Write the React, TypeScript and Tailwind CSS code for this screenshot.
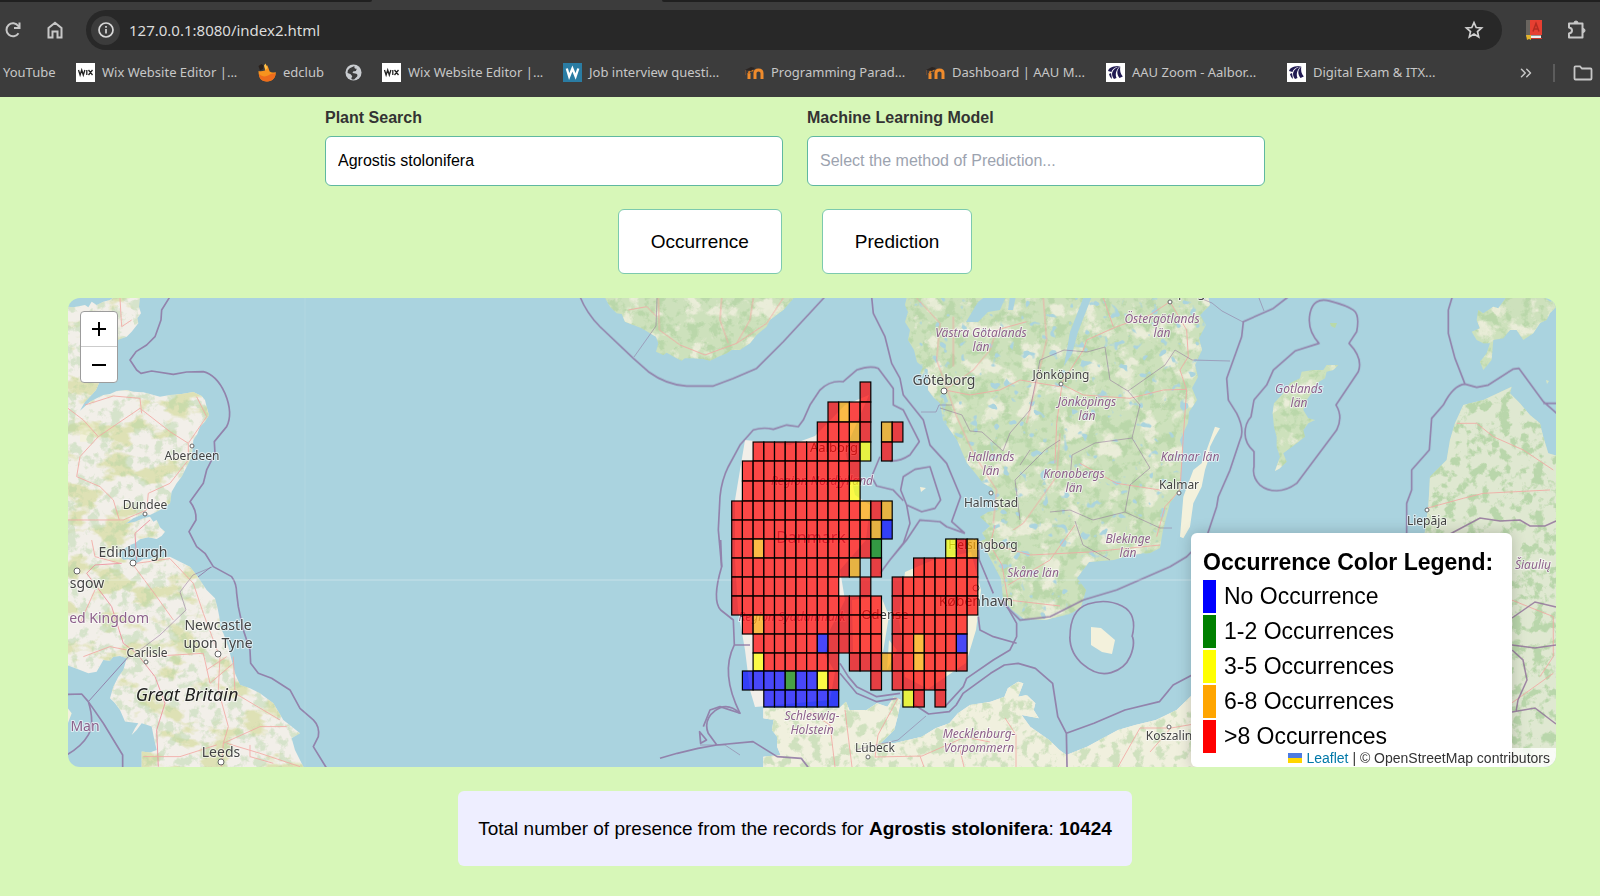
import { ChevronsRight } from "lucide-react";

const ROW_EDGES = [382, 402, 422, 442, 461, 481, 501, 520, 539, 558, 577, 596, 615, 634, 653, 671, 690, 707];
const CELL_ROWS = [
  "............R",
  ".........RORR",
  "........RRROR.OR",
  "..RRRRRRRRRRY.R",
  ".RRRRRRRRRRR",
  ".RRRRRRRRRRY",
  "RRRRRRRRRRRRORO",
  "RRRRRRRRRRRRROB",
  "RRORRRRRRRRRRG......YRO",
  "RRRRRRRRRRRO.R...RRRRRR",
  "RRRRRRRRRR..R..RRRRRRRR",
  "RRRRRRRRRRRRRR.RRRRRRRR",
  ".RORRRRRRRRRRR.RRRRRRR",
  "..RRRRRRBRRRRR.RRORRRB",
  "..YRRRRRRR.RRRORRORRRR",
  ".BBBBGBBYR...R.RRRRR",
  "...BBBBBBB......YR.R",
];
const CELL_FILL: Record<string, string> = { R: "#ff0000", O: "#ffa500", Y: "#ffff00", G: "#008000", B: "#0000ff" };
const COL_START = 731.7;
const COL_WIDTH = 10.7;

const LEGEND = [
  { swatch: "bg-[#0000ff]", label: "No Occurrence" },
  { swatch: "bg-[#008000]", label: "1-2 Occurrences" },
  { swatch: "bg-[#ffff00]", label: "3-5 Occurrences" },
  { swatch: "bg-[#ffa500]", label: "6-8 Occurrences" },
  { swatch: "bg-[#ff0000]", label: ">8 Occurrences" },
];

function WixIcon() {
  return (
    <svg viewBox="0 0 19 19" className="size-[19px] shrink-0">
      <rect width="19" height="19" fill="#fff" />
      <path d="M2.500 7l1.600 5 1.600-5 1.600 5 1.600-5M10.800 7v5M12.500 7l4 5M16.500 7l-4 5" fill="none" stroke="#222" strokeWidth="1.300" />
    </svg>
  );
}

function EdclubIcon() {
  return (
    <svg viewBox="0 0 18 19" className="h-[19px] w-[18px] shrink-0">
      <path d="M.5 8c0 7 3 10.500 8.500 10.500s9-4 8.700-9.500c-2 .6-4 1-6-.5L9.500 2.500 6.500 3l.5 4.500c-3 1-5 .8-6.500.5z" fill="#f7931e" />
      <path d="M1 11c3 3 7 3 10 1s5-1.500 6.500-1.500c0 4-3 8-8.500 8s-8-3.500-8-7.500z" fill="#ee6c1c" />
      <path d="M.5 3l3-2 2 1.500-.5 3.500-3 1.500z" fill="#2a211c" />
      <path d="M6 2.500L7.500.5l2 4.500-2 2z" fill="#ffc04a" />
    </svg>
  );
}

function GlobeIcon() {
  return (
    <svg viewBox="0 0 18 18" className="size-[17px] shrink-0">
      <circle cx="9" cy="9" r="8.500" fill="#c9ccd0" />
      <path d="M5 4.500l5-2.500c-.5 2 .5 3 2.500 3l-1 2.500-3 .5-.5 1.500 4 .8c2 1 1.200 3-.3 4l-2 2c-2 .3-3-.3-3-1.300l1-2-2-2.500-3-1 .3-3z" fill="#3c3c3c" />
    </svg>
  );
}

function WBadgeIcon() {
  return (
    <svg viewBox="0 0 19 19" className="size-[19px] shrink-0">
      <rect width="19" height="19" fill="#2a7ca3" />
      <path d="M3.800 5.500l2.400 8 3.200-8 3.200 8 2.700-8" fill="none" stroke="#fff" strokeWidth="2.300" />
    </svg>
  );
}

function MoodleIcon() {
  return (
    <svg viewBox="0 0 20 14" className="h-[14px] w-5 shrink-0">
      <path d="M5 13V7M11 13V7c0-4 7-4 7 0v6" fill="none" stroke="#ef8b2c" strokeWidth="3" />
      <path d="M5 8V6.500C5 4.500 8 4 9 5" fill="none" stroke="#d97a22" strokeWidth="2" />
      <path d="M1 4l6-3 4 1-4 3z" fill="#2c2522" />
      <path d="M1.500 4v5" stroke="#6b4a35" strokeWidth="1" />
    </svg>
  );
}

function AauIcon() {
  return (
    <svg viewBox="0 0 19 19" className="size-[19px] shrink-0">
      <rect width="19" height="19" fill="#fff" />
      <path d="M2 8c1-4 6-5 12-5-4 1-8 3-8.500 6z" fill="#211a52" />
      <path d="M8 16c-4-5-2-10 6-13-4 4-5 8-3.500 12z" fill="#211a52" />
      <path d="M13.500 15c-3-4-3-8 .8-11.500-.6 4 0 7 2.500 10z" fill="#211a52" />
      <path d="M3 11c.5 2 1.500 4 3 5l-1-6z" fill="#211a52" />
    </svg>
  );
}

const BOOKMARKS = [
  { label: "Wix Website Editor |...", Icon: WixIcon, box: "w-[162px]" },
  { label: "edclub", Icon: EdclubIcon, box: "w-[67px]" },
  { label: "", Icon: GlobeIcon, box: "w-[17px]" },
  { label: "Wix Website Editor |...", Icon: WixIcon, box: "w-[161px]" },
  { label: "Job interview questi...", Icon: WBadgeIcon, box: "w-[161px]" },
  { label: "Programming Parad...", Icon: MoodleIcon, box: "w-[161px]" },
  { label: "Dashboard | AAU M...", Icon: MoodleIcon, box: "w-[161px]" },
  { label: "AAU Zoom - Aalbor...", Icon: AauIcon, box: "w-[161px]" },
  { label: "Digital Exam & ITX...", Icon: AauIcon, box: "w-[161px]" },
];

function BrowserBar() {
  return (
    <header className="bg-[#3c3c3c] font-['Noto_Sans',sans-serif] text-[#c7c7c7]">
      <div className="flex h-[2px] justify-between">
        <div className="w-[372px] rounded-br-lg bg-[#202020]" />
        <div className="w-[938px] rounded-bl-lg bg-[#202020]" />
      </div>
      <div className="flex items-center pt-2">
        <button aria-label="Reload" className="ml-1 shrink-0">
          <svg viewBox="0 0 18 18" className="size-[18px]" fill="none" stroke="#c7c7c7" strokeWidth="2">
            <path d="M14.500 12.200A6.500 6.500 0 1 1 14.300 5L15.500 6.500M15.500 1.500V7H10" />
          </svg>
        </button>
        <button aria-label="Home" className="ml-6 shrink-0">
          <svg viewBox="0 0 18 20" className="h-5 w-[18px]" fill="none" stroke="#c7c7c7" strokeWidth="2">
            <path d="M2.500 8L9 2.700 15.500 8v9.500h-4v-6h-5v6h-4z" />
          </svg>
        </button>
        <div className="ml-[22px] flex h-10 flex-1 items-center rounded-full bg-[#282828] pr-[18px] pl-[5px]">
          <button aria-label="Site information" className="flex size-[29px] items-center justify-center rounded-full bg-[#3c3c3c]">
            <svg viewBox="0 0 16 16" className="size-4" fill="none" stroke="#d8d8d8" strokeWidth="1.700">
              <circle cx="8" cy="8" r="7" />
              <path d="M8 7v4.500M8 4v1.700" />
            </svg>
          </button>
          <input
            aria-label="Address"
            defaultValue="127.0.0.1:8080/index2.html"
            className="ml-[9px] h-8 flex-1 bg-transparent text-[15px] text-[#dcdcdc] outline-none"
          />
          <button aria-label="Bookmark this page">
            <svg viewBox="0 0 20 20" className="size-5" fill="none" stroke="#d0d0d0" strokeWidth="1.700">
              <path d="M10 2.500l2.200 5 5.400.5-4.100 3.600 1.200 5.300L10 14.100l-4.700 2.800 1.200-5.300L2.400 8l5.400-.5z" />
            </svg>
          </button>
        </div>
        <button aria-label="Dictionary" className="ml-6 shrink-0">
          <svg viewBox="0 0 16 20" className="h-5 w-4">
            <path d="M0 0h4v17H0z" fill="#69655f" />
            <path d="M4 0h12v15H4z" fill="#e63f31" />
            <path d="M4 15.500h11V18H4z" fill="#eee" />
            <path d="M4 18h12v1H4z" fill="#c7372c" />
            <path d="M0 15h5v5l-2-1-2 1z" fill="#e5b52c" />
            <path d="M7 11.500l3-8 3 8M8 9h4" stroke="#b32b20" strokeWidth="1.500" fill="none" />
          </svg>
        </button>
        <button aria-label="Extensions" className="mr-[13px] ml-[25px] shrink-0">
          <svg viewBox="0 0 20 20" className="size-5" fill="none" stroke="#c7c7c7" strokeWidth="2">
            <path d="M2 3.500h13.500v14H2v-4c4-.5 4-5.500 0-6z" strokeLinejoin="round" />
            <path d="M7 3a2 2 0 0 1 4 0zM16 8.500a2 2 0 0 1 0 4z" fill="#c7c7c7" strokeWidth="1" />
          </svg>
        </button>
      </div>
      <nav aria-label="Bookmarks" className="flex h-[47px] items-center pb-[2px] pl-[3px] text-[13px] whitespace-nowrap">
        <a href="#youtube" className="w-[54px]">YouTube</a>
        <div className="ml-[19px] flex items-center gap-5">
          {BOOKMARKS.map(({ label, Icon, box }, i) => (
            <a key={i} href="#bookmark" aria-label={label || "Website"} className={`flex shrink-0 items-center gap-[7px] ${box}`}>
              <Icon />
              {label && <span>{label}</span>}
            </a>
          ))}
        </div>
        <div className="ml-auto flex items-center pr-[7px]">
          <button aria-label="More bookmarks"><ChevronsRight className="size-[18px]" /></button>
          <div className="mr-[18px] ml-[18px] h-[18px] w-[2px] bg-[#5c5c5c]" />
          <button aria-label="All bookmarks">
            <svg viewBox="0 0 20 16" className="h-4 w-5" fill="none" stroke="#c7c7c7" strokeWidth="1.800">
              <path d="M1.500 2.500c0-1 .5-1.200 1-1.200H7l2 2.200h8.500c.7 0 1 .5 1 1v9c0 .7-.4 1-1 1h-15c-.7 0-1-.4-1-1z" />
            </svg>
          </button>
        </div>
      </nav>
    </header>
  );
}

type Label = [text: string, x: number, y: number, size: number];
const CITIES: Label[] = [
  ["Aberdeen", 192, 460, 12], ["Dundee", 145, 509, 12], ["Edinburgh", 133, 557, 14], ["sgow", 87, 588, 14],
  ["Newcastle", 218, 630, 14], ["upon Tyne", 218, 648, 14], ["Carlisle", 147, 657, 12], ["Leeds", 221, 757, 14],
  ["Göteborg", 944, 385, 14], ["Jönköping", 1061, 379, 12], ["Halmstad", 991, 507, 12], ["Kalmar", 1179, 489, 12],
  ["Liepāja", 1427, 525, 12], ["Helsingborg", 983, 549, 12], ["København", 976, 606, 14], ["Odense", 885, 619, 13],
  ["Aalborg", 834, 452, 13], ["Lübeck", 875, 752, 12], ["Koszalin", 1169, 740, 12], ["Norrköping", 1170, 297, 13],
];
const REGIONS: Label[] = [
  ["Västra Götalands", 981, 337, 12], ["län", 981, 351, 12], ["Hallands", 991, 461, 12], ["län", 991, 475, 12],
  ["Östergötlands", 1162, 323, 12], ["län", 1162, 337, 12], ["Jönköpings", 1087, 406, 12], ["län", 1087, 420, 12],
  ["Kalmar län", 1190, 461, 12], ["Kronobergs", 1074, 478, 12], ["län", 1074, 492, 12], ["Gotlands", 1299, 393, 12],
  ["län", 1299, 407, 12], ["Blekinge", 1128, 543, 12], ["län", 1128, 557, 12], ["Skåne län", 1033, 577, 12],
  ["Region Nordjylland", 822, 485, 12], ["Region Syddanmark", 792, 621, 12], ["Schleswig-", 812, 720, 12], ["Holstein", 812, 734, 12],
  ["Mecklenburg-", 979, 738, 12], ["Vorpommern", 979, 752, 12], ["Šiaulių", 1533, 569, 12],
];
const DOTS = [
  [192, 446, 2], [145, 514, 2], [133, 563, 3], [77, 571, 3], [218, 654, 3], [146, 662, 2], [221, 762, 3], [944, 391, 3],
  [1061, 384, 2], [991, 493, 2], [1179, 493, 2], [1427, 510, 2], [976, 588, 3], [868, 757, 2], [1169, 727, 2], [1170, 302, 2],
];

const BRITAIN =
  "M24 50L40 52 60 48 75 45 85 52 95 35 110 45 130 35 150 30 165 20H240L237 50 243 70 232 85 235 100 215 125 200 140 172 150 150 190 130 250 108 300 90 320 75 335 60 362 90 335 110 325 130 315 150 312 170 303 200 300 220 305 250 307 270 312 300 320 330 315 365 312 400 306 425 318 435 330 440 350 447 375 435 395 420 410 412 432 400 450 398 475 395 500 380 530 365 560 350 580 335 605 330 640 310 655 290 665 270 675 250 672 220 685 195 702 225 695 250 685 270 680 280 695 290 690 300 712 315 725 305 738 290 747 265 742 240 748 225 760 210 765 190 778 170 792 190 810 205 808 230 820 250 808 270 807 300 803 330 800 360 815 390 830 405 850 420 870 440 900 465 925 472 950 478 980 480 1010 490 1030 505 1070 515 1110 525 1150 540 1185 570 1195 600 1210 640 1240 655 1265 670 1290 695 1310 720 1330 695 1345 705 1380 735 1440H245V1385L270 1388 290 1380 282 1345 275 1310 262 1305 245 1300 230 1320 215 1335 225 1315 235 1300 195 1295 180 1260 165 1240 150 1225 160 1190 175 1160 190 1140 200 1105 180 1098 160 1100 150 1112 130 1110 110 1145 85 1150 60 1140 20 1125z";
const NORWAY = "M103 20L120 50 140 70 155 72 165 95 190 105 215 115 240 130 258 140 265 160 258 185 280 195 290 188 320 205 335 212 345 205 370 205 400 207 420 212 445 200 470 190 485 180 510 180 540 160 560 135 590 110 600 90 640 60 675 20z";
const SWEDEN =
  "M907 296L905 305 908 312 905 322 910 330 908 340 914 350 917 362 923 367 920 373 928 380 928 390 934 398 940 403 943 420 957 440 962 452 967 463 975 473 983 483 992 488 995 495 998 510 988 512 980 517 990 526 982 533 986 539 978 542 986 550 991 560 1001 579 1003 598 1012 610 1024 619 1045 620 1070 614 1081 607 1086 590 1077 578 1089 562 1114 560 1130 555 1150 553 1160 548 1163 530 1170 503 1180 490 1181 470 1183 450 1180 440 1188 423 1189 412 1197 400 1192 388 1198 377 1195 365 1202 350 1199 338 1206 325 1200 315 1210 305 1208 296z";
const GERMANY =
  "M300 400V350L350 345 340 320 340 290 325 270 330 240 300 235V205H520L540 185 550 210 600 210 630 190 660 200 680 170 700 180 690 230 680 270 640 310 680 310 720 300 760 290 800 265 840 250 865 220 900 195 960 185 1000 170 1010 145 1040 125 1055 130 1040 170 1065 165 1090 190 1085 210 1100 235 1050 225 1075 260 1130 300 1160 330 1180 345 1240 320 1330 270 1380 255 1440 240 1500 210 1545 165 1620 100V400z";
const GOTLAND = "M865 225L850 240 830 245 825 265 800 280 785 310 770 330 760 360 775 385 795 390 775 400 760 420 765 440 740 460 720 475 700 490 710 515 690 535 675 543 690 500 680 470 680 440 672 410 668 370 672 340 700 310 720 280 750 265 755 245 790 240 820 240 830 225z";
const OLAND = "M495 410L510 415 495 440 480 470 475 510 465 540 455 590 430 640 420 710 400 745 390 740 400 620 430 540 455 520 470 480z";
const SAAREMAA = "M1285 60L1300 70 1330 50 1345 55 1370 20H1480L1500 35 1520 30V50L1500 70 1490 90 1470 100 1450 130 1420 150 1400 120 1380 120 1360 145 1330 150 1325 210 1300 240 1290 215 1310 190 1320 160 1300 160 1280 150 1265 125 1290 115 1280 90z";
const LATVIA = "M1385 290L1380 310 1410 340 1440 375 1470 400 1480 440 1495 490 1530 500V1430H1370V1000L1120 1000 1100 850 1120 760 1135 650 1140 560 1190 510 1200 450 1215 400 1240 345 1300 330z";
const JUTLAND = "M869 395L845 405 815 436 790 445 745 440 740 470 735 500 735 560 738 610 745 650 750 690 755 707 830 700 835 672 825 655 830 630 845 600 840 570 866 540 870 505 855 495 845 450z";

function Land() {
  return (
    <>
      <g fill="#f2efe9">
        <path d={BRITAIN} transform="translate(60 290) scale(.3333)" />
        <path d={JUTLAND} />
        <path d={GERMANY} transform="translate(660 640) scale(.3444 .3333)" />
      </g>
      <g fill="#cde1bc">
        <path d={NORWAY} transform="translate(570 290) scale(.3333)" />
        <path d={SWEDEN} />
        <path d={GOTLAND} transform="translate(1050 290) scale(.3333)" />
        <path d={SAAREMAA} transform="translate(1050 290) scale(.3333)" />
        <path d={LATVIA} transform="translate(1050 290) scale(.3333)" />
      </g>
      <g fill="#f3f1dc">
        <path d={OLAND} transform="translate(1050 290) scale(.3333)" />
        <path d="M1091 627L1101 628 1115 640 1112 654 1102 652 1091 645z" />
        <path d="M852 600l29-4 8 20-6 36-30 0zM905 572l28-12 38-8 10 38-5 40-10 33-38 26-23-12-6-60zM889 640l8 10-10 20zM920 487l6 1-5 4z" />
        <path d="M60 400h40v55H60zM20 1250l15 20-15 40z" transform="translate(60 290) scale(.3333)" />
      </g>
      <path d="M1330 323l7 0-2 5-4-2z" fill="#b9d9a8" />
      <path d="M1546 380l3 1-2 3z" fill="#d6e6c6" />
    </>
  );
}

function BaseMap() {
  return (
    <svg
      role="img"
      aria-label="Occurrence map of Denmark"
      viewBox="68 298 1488 469"
      preserveAspectRatio="xMidYMid slice"
      className="block h-full w-full"
    >
      <defs>
        <clipPath id="west"><path d={BRITAIN} transform="translate(60 290) scale(.3333)" /></clipPath>
        <clipPath id="south"><path d={GERMANY} transform="translate(660 640) scale(.3444 .3333)" /></clipPath>
        <clipPath id="north">
          <path d={NORWAY} transform="translate(570 290) scale(.3333)" />
          <path d={SWEDEN} />
          <path d={GOTLAND} transform="translate(1050 290) scale(.3333)" />
          <path d={SAAREMAA} transform="translate(1050 290) scale(.3333)" />
        </clipPath>
        <clipPath id="east"><path d={LATVIA} transform="translate(1050 290) scale(.3333)" /></clipPath>
        <filter id="forest" x="0" y="0" width="1" height="1" colorInterpolationFilters="sRGB">
          <feTurbulence type="fractalNoise" baseFrequency=".09" numOctaves="4" seed="4" />
          <feColorMatrix values="0 0 0 0 .68  0 0 0 0 .82  0 0 0 0 .62  7 0 0 0 -3.500" />
        </filter>
        <filter id="fields" x="0" y="0" width="1" height="1" colorInterpolationFilters="sRGB">
          <feTurbulence type="fractalNoise" baseFrequency=".05" numOctaves="5" seed="11" />
          <feColorMatrix values="0 0 0 0 .95  0 0 0 0 .94  0 0 0 0 .88  7 0 0 0 -3.900" />
        </filter>
        <filter id="moor" x="0" y="0" width="1" height="1" colorInterpolationFilters="sRGB">
          <feTurbulence type="fractalNoise" baseFrequency=".03 .05" numOctaves="4" seed="7" />
          <feColorMatrix values="0 0 0 0 .85  0 0 0 0 .87  0 0 0 0 .66  8 0 0 0 -4.200" />
        </filter>
        <filter id="lakes" x="0" y="0" width="1" height="1" colorInterpolationFilters="sRGB">
          <feTurbulence type="fractalNoise" baseFrequency=".1" numOctaves="2" seed="23" />
          <feColorMatrix values="0 0 0 0 .67  0 0 0 0 .83  0 0 0 0 .87  12 0 0 0 -8" />
        </filter>
      </defs>
      <rect x="68" y="298" width="1488" height="469" fill="#aad3df" />
      <Land />
      <g clipPath="url(#west)">
        <rect x="68" y="298" width="260" height="469" filter="url(#moor)" opacity=".8" />
        <rect x="68" y="298" width="260" height="469" filter="url(#forest)" opacity=".4" />
      </g>
      <g clipPath="url(#south)">
        <rect x="740" y="670" width="480" height="100" fill="#f0f0de" />
        <rect x="740" y="670" width="480" height="100" filter="url(#forest)" opacity=".5" />
      </g>
      <g clipPath="url(#north)">
        <rect x="590" y="298" width="966" height="330" filter="url(#forest)" opacity=".6" />
        <rect x="590" y="298" width="966" height="330" filter="url(#fields)" opacity=".8" />
        <rect x="850" y="298" width="380" height="330" filter="url(#lakes)" />
      </g>
      <g clipPath="url(#east)">
        <rect x="1400" y="380" width="156" height="387" fill="#efeee2" opacity=".55" />
        <rect x="1400" y="380" width="156" height="387" filter="url(#forest)" opacity=".75" />
      </g>

      {/* Large lakes */}
      <path d="M966 322l12-20 8-6h20l-6 14-12 2-10 10zM1064 366l6-34 14-36h8l-14 36-6 22zM1010 296h6l-3 14h-5z" fill="#aad3df" />

      {/* Roads */}
      <g fill="none" stroke="#f2a9a4" strokeWidth="1" opacity=".85">
        <g transform="translate(60 290) scale(.3333)" strokeWidth="3">
          <path d="M24 355L70 390 115 440 60 500 50 560 120 590 160 630 178 690M115 440L240 355 330 425 385 460 440 380 410 320M75 345L160 318 240 325 245 370M385 460V510L330 580 265 610 260 660 190 690 24 690" />
          <path d="M230 810L225 730 270 690M185 820L105 825 80 850 155 950 190 1060 230 1090 285 1160 315 1240 290 1320 295 1430" stroke="#ec8f9c" />
          <path d="M220 825L290 920 340 990M230 820L330 806 400 880 430 970 475 1090M480 1100L475 1200 505 1310 490 1360 485 1430M520 1100L525 1210 660 1290M490 1360L600 1310 680 1310M500 1360L600 1390 720 1430M260 1100L430 1090M250 1400L360 1400 470 1365M570 1365V1400L640 1420M430 1090L450 1180 520 1120M70 1100L150 1070 200 1080M440 1140L500 1100" />
          <path d="M180 24L185 110 215 90M95 750L105 800 180 820M60 1000L105 900" />
        </g>
        <g transform="translate(570 290) scale(.3333)" strokeWidth="3">
          <path d="M265 24L268 120 330 165 405 195 500 160 590 100 640 24M455 24L450 90 475 160M550 24L540 90 500 160M175 60L230 50 260 80" />
          <path d="M1040 24L1110 100 1100 210 1125 280 1160 380 1210 490 1280 600 1270 700M1125 300L1200 315 1290 300 1350 270 1470 290M1125 300L1210 240 1260 180 1280 120 1370 95M1150 80L1150 230M1420 24L1430 150 1370 400M1470 430L1460 560 1360 700 1330 720" />
        </g>
        <g transform="translate(1050 290) scale(.3333)" strokeWidth="3">
          <path d="M35 280L100 180 110 150 200 110 300 75 360 35M160 24L190 110M360 35L410 120 415 200 390 240 410 300 400 440 390 600 345 650 320 740M35 290L20 400 15 520M40 285L100 315 240 325 340 300 410 298M90 520L200 580 330 600" />
          <path d="M1130 655L1240 625 1300 610 1500 600M1220 400L1280 400 1330 440 1420 480 1510 540M1360 920L1510 980 1510 1100 1470 1160M1370 1250L1440 1200 1510 1150" />
        </g>
        <path d="M995 525L990 545 1002 565 1008 600M1008 600L1060 606M995 545L1030 555 1090 552 1160 545M1008 585L1050 560 1075 525M810 712L830 725 835 767M845 710L852 767M898 698L878 735 875 757M875 757L922 756 965 737 990 742M920 756L924 767M1005 718L1016 735 1016 767M960 750L964 767M1171 728L1140 728 1118 767M1200 723L1171 728 1150 752" />
      </g>

      {/* County borders */}
      <g fill="none" stroke="#8f6d99" strokeWidth="1" opacity=".5">
        <path d="M212 567L193 575 180 592 186 610 160 635 140 650M657 298L656 326 634 357M921 412H936L939 405H952" />
        <path d="M940 408L962 415 970 431 982 432 1003 451 1010 433 1030 410 1040 360 1064 350M1064 350L1087 352 1105 347 1110 380 1128 391 1165 365 1175 350 1192 360 1230 361M1128 391L1140 405 1132 438 1095 443 1072 455 1070 480M1132 438L1150 468 1130 485 1125 512 1093 520 1070 510 1050 512M1125 512L1160 528 1172 528M1075 521L1083 545 1110 560M1020 520L1015 480 1045 450 1060 440M1030 450L1020 465" />
        <path d="M1259 298L1264 311M1243 322L1222 311 1212 303 1200 298M700 745H725L740 755M855 750L898 740 926 716" />
      </g>
      <g fill="none" stroke="#8f6d99" strokeWidth="1.500" opacity=".8">
        <path d="M1450 534L1480 518 1500 521 1520 520 1530 526 1545 526 1556 521M1512 650L1523 660 1527 680 1518 700 1516 712M1512 712L1535 708 1556 724M1512 618L1535 602 1556 607M1512 645L1535 648 1556 645" />
      </g>

      {/* Maritime borders */}
      <g fill="none" stroke="#8e75a3" strokeWidth="1.600" strokeLinejoin="round" opacity=".85">
        <g transform="translate(60 290) scale(.3333)" strokeWidth="5">
          <path d="M330 20L305 60 303 90 285 140 260 165 228 185 210 210 230 240 243 250 275 243 340 253 380 246 430 245Q470 255 495 310Q520 370 500 410L463 455 465 490 440 540 430 580 390 635Q410 660 408 690L387 725 410 770 435 790 460 830 515 860Q530 880 530 910L535 950 550 1020 570 1080 572 1120 595 1150 635 1165 690 1200 720 1255 760 1290Q780 1310 775 1340L760 1370 800 1435" />
          <path d="M24 1213L65 1212 85 1235 130 1300 188 1395V1435M85 1235Q105 1300 85 1335T20 1395" />
        </g>
        <path d="M88 702L130 655M198 577L211 567" strokeWidth="1" />
        <g transform="translate(570 290) scale(.3333)" strokeWidth="5">
          <path d="M30 20Q50 70 90 110L190 205 235 245Q290 285 350 288H430L490 265 560 235 640 155 765 20" />
          <path d="M455 830L445 720 450 620Q455 570 475 530L510 465 550 420Q580 410 610 418L650 405 685 410 700 390 720 345 750 300Q780 270 820 275L860 240Q900 225 925 235L970 295V345L1000 360 1048 455 1020 495Q990 515 960 513M930 500L905 560 920 588 970 600 1000 632" />
          <path d="M905 20L910 70 945 140 965 220 990 265 1000 315 1060 390 1080 465 1130 520 1172 620 1145 695 1185 730M1080 530L1112 630 1095 655 1055 665 1010 645 992 600 1000 560 1035 538zM1010 645L1020 700 1000 760 960 810 930 850M1185 730L1130 710 1110 695 1050 690 1010 750 960 810" />
        </g>
        <g transform="translate(700 540) scale(.3333)" strokeWidth="5">
          <path d="M62 0L65 80Q35 180 62 210L100 240 103 315Q60 400 120 520L60 500 30 510 10 560M103 315L150 315M835 0L838 60 880 160M835 230L840 270 880 290 950 310M420 370L445 410 470 440 530 470 600 460M420 400L470 460 530 485 590 475" />
          <path d="M735 500L790 440 800 415 880 360 930 330 950 290 950 250 910 180" />
        </g>
        <g transform="translate(660 640) scale(.3444 .3333)" strokeWidth="5">
          <path d="M0 355L50 340 110 325 165 315 140 280Q125 240 160 212T232 220M115 275L118 310 135 300zM740 195L780 222 840 215 860 195 880 160 960 100 1000 75 1040 70 1090 85 1140 130 1155 230 1180 280 1182 390M1180 280L1260 250 1350 210 1450 185 1490 135 1545 105M1190 -10Q1190 40 1230 75T1310 98 1365 50 1372 -10M165 315L270 305 340 350 410 355 430 382" />
        </g>
        <path d="M1070 637Q1070 610 1088 604T1122 606T1132 637" />
        <g transform="translate(1050 290) scale(.3333)" strokeWidth="5">
          <path d="M715 20L670 55 580 95 575 140 530 265 535 330 560 370Q585 420 570 450L540 540 505 620 500 650 470 740 410 800 360 830 200 900 100 930 0 980 -90 990 -150 930" />
          <path d="M807 160Q770 120 780 70T840 33 910 60 920 125L897 160Q940 205 925 245L858 345Q880 380 860 420L740 580Q710 602 680 602Q650 602 630 585Q605 560 612 530V485Q585 460 585 430Q585 400 603 380L612 330 650 285 670 240 735 183z" />
          <path d="M1207 20L1195 60V130L1215 205 1245 282 1280 292 1315 285 1390 237 1407 235 1480 335 1520 370M1480 340H1520M1245 282Q1210 285 1180 345L1145 385 1138 480 1085 540V600L1070 640V740" />
        </g>
      </g>

      {/* Tile seams */}
      <path d="M68 580H1191" stroke="#fff" strokeWidth="1" opacity=".35" />
      <path d="M305 298V767" stroke="#fff" strokeWidth="1" opacity=".1" />

      <g fill="#fff" stroke="#666" strokeWidth="1">
        {DOTS.map(([x, y, r]) => <circle key={`${x}-${y}`} cx={x} cy={y} r={r} />)}
      </g>
      <g
        fontFamily="'Noto Sans', sans-serif"
        textAnchor="middle"
        stroke="#fff"
        strokeOpacity=".6"
        strokeWidth="2"
        paintOrder="stroke"
        strokeLinejoin="round"
      >
        <g fill="#8d618b" fontStyle="italic">
          {REGIONS.map(([text, x, y, size], i) => <text key={i} x={x} y={y} fontSize={size}>{text}</text>)}
        </g>
        <g fill="#8d618b">
          <text x="149" y="623" fontSize="14" textAnchor="end">ed Kingdom</text>
          <text x="85" y="731" fontSize="14">Man</text>
          <text x="811" y="543" fontSize="16">Danmark</text>
        </g>
        <g fill="#444">
          {CITIES.map(([text, x, y, size]) => <text key={text} x={x} y={y} fontSize={size}>{text}</text>)}
        </g>
        <text x="187" y="701" fontSize="18" fontStyle="italic" fill="#222">Great Britain</text>
      </g>

      {/* Occurrence grid */}
      <g stroke="#000" strokeWidth="1.200" fillOpacity=".7">
        {CELL_ROWS.flatMap((row, r) =>
          [...row].map((cell, c) =>
            cell === "." ? null : (
              <rect
                key={`${r}-${c}`}
                x={COL_START + c * COL_WIDTH}
                y={ROW_EDGES[r]}
                width={COL_WIDTH}
                height={ROW_EDGES[r + 1] - ROW_EDGES[r]}
                fill={CELL_FILL[cell]}
              />
            ),
          ),
        )}
      </g>
    </svg>
  );
}

function OccurrenceMap() {
  return (
    <section className="relative mt-6 mr-[34px] ml-[68px] h-[469px] overflow-hidden rounded-xl">
      <BaseMap />
      <div className="absolute top-[13px] left-3 flex w-[38px] flex-col overflow-hidden rounded border border-[#9c9c9c] bg-white">
        <button aria-label="Zoom in" className="flex h-[35px] items-center justify-center border-b border-[#ccc]">
          <svg viewBox="0 0 16 16" className="size-4" stroke="#000" strokeWidth="2"><path d="M1 8h14M8 1v14" /></svg>
        </button>
        <button aria-label="Zoom out" className="flex h-[35px] items-center justify-center">
          <svg viewBox="0 0 16 16" className="size-4" stroke="#000" strokeWidth="2"><path d="M1 8h14" /></svg>
        </button>
      </div>
      <aside className="absolute right-11 bottom-0 w-[321px] rounded-md bg-white px-3 pt-[14px] pb-[14px] text-[23px] text-black shadow-[0_0_15px_rgba(0,0,0,0.2)]">
        <h2 className="h-[33px] leading-[30px] font-bold whitespace-nowrap">Occurrence Color Legend:</h2>
        <ul className="flex flex-col gap-[2px]">
          {LEGEND.map(({ swatch, label }) => (
            <li key={label} className="flex h-[33px] items-center gap-2">
              <span className={`h-full w-[13px] ${swatch}`} />
              {label}
            </li>
          ))}
        </ul>
      </aside>
      <div className="absolute right-0 bottom-0 flex h-[19px] items-center bg-white/80 pr-[6px] pl-1 text-sm text-[#333]">
        <svg viewBox="0 0 14 10" className="mr-1 h-[10px] w-[14px]">
          <path fill="#4c7be1" d="M0 0h14v5H0z" />
          <path fill="#ffd500" d="M0 5h14v5H0z" />
        </svg>
        <a href="#leaflet" className="text-[#0078a8]">Leaflet</a>
        <span className="whitespace-pre"> | © OpenStreetMap contributors</span>
      </div>
    </section>
  );
}

export default function App() {
  return (
    <div className="min-h-screen bg-[#d7f7b8] font-['Liberation_Sans',Arial,sans-serif]">
      <BrowserBar />
      <main className="pr-[10px] pb-[30px]">
        <form className="mx-auto grid max-w-[940px] grid-cols-2 gap-x-6 pt-2 text-base" onSubmit={(e) => e.preventDefault()}>
          <div>
            <label htmlFor="plant" className="mb-1 block h-[27px] leading-[26px] font-bold text-[#333]">Plant Search</label>
            <input id="plant" defaultValue="Agrostis stolonifera" className="h-[50px] w-full rounded-md border border-[#5fb8a0] bg-white px-3 text-black" />
          </div>
          <div>
            <label htmlFor="model" className="mb-1 block h-[27px] leading-[26px] font-bold text-[#333]">Machine Learning Model</label>
            <input id="model" placeholder="Select the method of Prediction..." className="h-[50px] w-full rounded-md border border-[#5fb8a0] bg-white px-3 placeholder:text-[#9ca3af]" />
          </div>
        </form>
        <div className="mt-[23px] flex justify-center gap-10 text-[19px] text-black">
          <button className="h-[65px] rounded-md border border-[#7cc9ae] bg-white px-8 pt-[2px]">Occurrence</button>
          <button className="h-[65px] rounded-md border border-[#7cc9ae] bg-white px-8 pt-[2px]">Prediction</button>
        </div>
        <OccurrenceMap />
        <p className="mx-auto mt-6 w-fit rounded-md bg-[#eeeeff] px-5 py-6 text-[19px] leading-[27px] text-black">
          Total number of presence from the records for <b>Agrostis stolonifera</b>: <b>10424</b>
        </p>
      </main>
    </div>
  );
}
